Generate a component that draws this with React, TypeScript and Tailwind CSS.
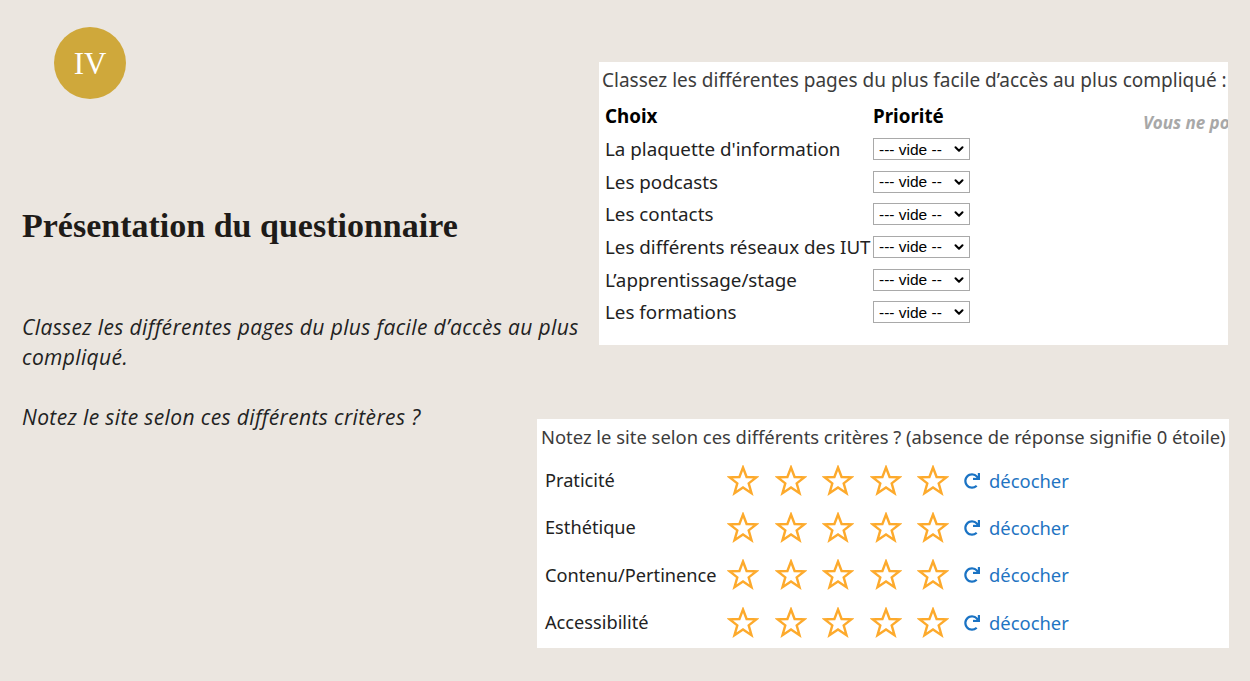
import { ChevronDown } from 'lucide-react';
import { FaRedo } from 'react-icons/fa';

const pages = [
  "La plaquette d'information",
  'Les podcasts',
  'Les contacts',
  'Les différents réseaux des IUT',
  'L’apprentissage/stage',
  'Les formations',
];

const criteres = ['Praticité', 'Esthétique', 'Contenu/Pertinence', 'Accessibilité'];

const Star = () => (
  <svg width="32" height="32" viewBox="0 0 32 32" className="shrink-0">
    <polygon
      points="16,2.5 19.6,12 29.5,12.3 21.7,18.4 24.5,28.2 16,22.4 7.5,28.2 10.3,18.4 2.5,12.3 12.4,12"
      fill="white"
      stroke="#fdaa2c"
      strokeWidth="2.4"
      strokeLinejoin="miter"
    />
  </svg>
);

const VideSelect = () => (
  <div className="flex items-center w-[97px] h-[22px] border border-[#a9a9a9] bg-white pl-[5px] pr-[3px] font-['Liberation_Sans',Arial,sans-serif] text-[15.5px] text-black">
    <span className="flex-1 leading-none">--- vide --</span>
    <ChevronDown className="w-[14px] h-[14px]" strokeWidth={3.5} />
  </div>
);

export default function App() {
  return (
    <div className="w-[1250px] h-[681px] bg-[#ebe6e0] flex overflow-hidden">
      {/* Left column */}
      <div className="w-[537px] shrink-0 pl-[22px]">
        <div className="ml-[32px] mt-[27px] w-[72px] h-[72px] rounded-full bg-[#cfa83b] flex items-center justify-center">
          <span className="font-['Liberation_Serif',serif] text-[31px] text-white leading-none">IV</span>
        </div>
        <h1 className="mt-[103px] font-['Liberation_Serif',serif] font-bold text-[34px] leading-[48px] text-[#1e1b18] whitespace-nowrap">
          Présentation du questionnaire
        </h1>
        <div className="mt-[62px] w-[565px] font-['Open_Sans',sans-serif] italic text-[21px] tracking-[0.37px] leading-[30px] text-[#222]">
          <p>Classez les différentes pages du plus facile d’accès au plus compliqué.</p>
          <p className="mt-[30px]">Notez le site selon ces différents critères ?</p>
        </div>
      </div>

      {/* Right column */}
      <div className="flex flex-col">
        {/* Classement */}
        <div className="ml-[62px] mt-[62px] w-[629px] h-[283px] bg-white overflow-hidden font-['Noto_Sans',sans-serif]">
          <p className="pl-[3px] pt-[5px] text-[19px] leading-[26px] text-[#3c3c3c] whitespace-nowrap">
            Classez les différentes pages du plus facile d’accès au plus compliqué :
          </p>
          <div className="flex mt-[7px] pl-[6px]">
            <div className="w-[268px] shrink-0">
              <div className="h-[33px] flex items-center font-bold text-[18.8px] text-black">Choix</div>
              {pages.map((p) => (
                <div key={p} className="h-[32.6px] flex items-center text-[18.8px] text-[#222] whitespace-nowrap">
                  {p}
                </div>
              ))}
            </div>
            <div className="w-[270px] shrink-0">
              <div className="h-[33px] flex items-center font-bold text-[18.8px] text-black">Priorité</div>
              {pages.map((p) => (
                <div key={p} className="h-[32.6px] flex items-center">
                  <VideSelect />
                </div>
              ))}
            </div>
            <div className="shrink-0 pt-[10px] font-bold italic text-[17px] text-[#a8a8a8] whitespace-nowrap">
              Vous ne pouvez pas choisir deux fois la même priorité
            </div>
          </div>
        </div>

        {/* Notation */}
        <div className="mt-[74px] w-[692px] h-[229px] bg-white font-['Noto_Sans',sans-serif]">
          <p className="pl-[4px] pt-[5px] text-[18.4px] leading-[26px] text-[#3c3c3c] whitespace-nowrap">
            Notez le site selon ces différents critères ? (absence de réponse signifie 0 étoile)
          </p>
          <div className="mt-[7px] pl-[8px]">
            {criteres.map((c) => (
              <div key={c} className="h-[47.3px] flex items-center">
                <span className="w-[182px] shrink-0 text-[18.2px] text-[#222] whitespace-nowrap">{c}</span>
                <div className="flex items-center gap-[15.5px]">
                  <Star />
                  <Star />
                  <Star />
                  <Star />
                  <Star />
                </div>
                <FaRedo className="ml-[15px] w-[16px] h-[16px] text-[#1a73c4]" />
                <span className="ml-[9px] text-[18.4px] text-[#1f74c2]">décocher</span>
              </div>
            ))}
          </div>
        </div>
      </div>
    </div>
  );
}
